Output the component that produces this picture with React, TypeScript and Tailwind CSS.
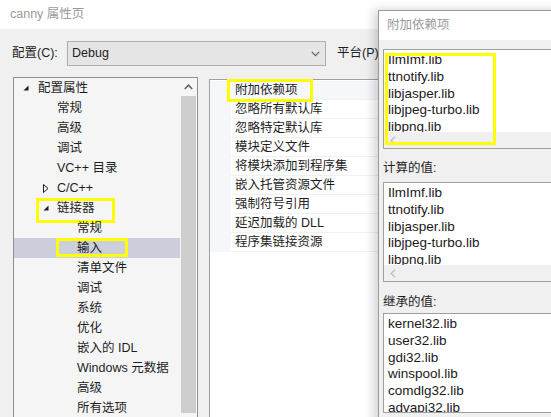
import type { ReactNode } from "react";

type TreeNode = {
  label: string;
  level: 0 | 1 | 2;
  arrow?: "open" | "closed";
  selected?: boolean;
  mark?: string;
};

const tree: TreeNode[] = [
  { label: "配置属性", level: 0, arrow: "open" },
  { label: "常规", level: 1 },
  { label: "高级", level: 1 },
  { label: "调试", level: 1 },
  { label: "VC++ 目录", level: 1 },
  { label: "C/C++", level: 1, arrow: "closed" },
  { label: "链接器", level: 1, arrow: "open", mark: "left-[22px] top-0 w-[79px] h-[25px]" },
  { label: "常规", level: 2 },
  { label: "输入", level: 2, selected: true, mark: "left-[42px] top-0 w-[72px] h-[19px]" },
  { label: "清单文件", level: 2 },
  { label: "调试", level: 2 },
  { label: "系统", level: 2 },
  { label: "优化", level: 2 },
  { label: "嵌入的 IDL", level: 2 },
  { label: "Windows 元数据", level: 2 },
  { label: "高级", level: 2 },
  { label: "所有选项", level: 2 },
];

const linkerInputs = [
  "附加依赖项",
  "忽略所有默认库",
  "忽略特定默认库",
  "模块定义文件",
  "将模块添加到程序集",
  "嵌入托管资源文件",
  "强制符号引用",
  "延迟加载的 DLL",
  "程序集链接资源",
];

const deps = ["IlmImf.lib", "ttnotify.lib", "libjasper.lib", "libjpeg-turbo.lib", "libpng.lib"];
const inherited = ["kernel32.lib", "user32.lib", "gdi32.lib", "winspool.lib", "comdlg32.lib", "advapi32.lib"];

function OpenArrow() {
  return (
    <svg width="6" height="6" viewBox="0 0 6 6" className="block">
      <path d="M5.5 0.5 V5.5 H0.5 Z" fill="#1e1e1e" />
    </svg>
  );
}

function ClosedArrow() {
  return (
    <svg width="6" height="9" viewBox="0 0 6 9" className="block">
      <path d="M0.5 0.5 L5 4.5 L0.5 8.5 Z" fill="none" stroke="#1e1e1e" strokeWidth="1" />
    </svg>
  );
}

function TreeRow({ node }: { node: TreeNode }) {
  const pad = node.level === 0 ? "pl-[9px]" : node.level === 1 ? (node.arrow ? "pl-[29px]" : "pl-[43px]") : "pl-[63px]";
  return (
    <div className={`relative h-[20px] flex items-center ${pad} ${node.selected ? "bg-[#cccedb]" : ""}`}>
      {node.arrow && (
        <span className={`w-[14px] flex ${node.level === 0 ? "w-[15px]" : ""}`}>
          {node.arrow === "open" ? <OpenArrow /> : <ClosedArrow />}
        </span>
      )}
      <span className="whitespace-nowrap">{node.label}</span>
      {node.mark && <span className={`absolute border-[3px] border-[#ffff00] ${node.mark}`} />}
    </div>
  );
}

function HScrollbar() {
  return (
    <div className="h-[16px] shrink-0 bg-[#f0f0f0] flex items-center pl-[6px]">
      <svg width="6" height="9" viewBox="0 0 6 9">
        <path d="M5 0.8 L1.2 4.5 L5 8.2" fill="none" stroke="#c4c4c4" strokeWidth="1.6" />
      </svg>
    </div>
  );
}

function LibBox({ items, scroll, children }: { items: string[]; scroll?: boolean; children?: ReactNode }) {
  return (
    <div className="relative h-[100px] border border-[#a0a0a0] bg-white flex flex-col">
      <div className="flex-1 overflow-hidden pl-[4px] pt-[2px] text-[13.5px] leading-[16.8px] text-[#1a1a1a]">
        {items.map((lib) => (
          <div key={lib} className="whitespace-nowrap">{lib}</div>
        ))}
      </div>
      {scroll && <HScrollbar />}
      {children}
    </div>
  );
}

export default function App() {
  return (
    <div className="relative w-[551px] h-[417px] overflow-hidden bg-[#f0f0f0] text-[12.5px] text-[#1e1e1e] font-['Liberation_Sans','Noto_Sans_CJK_SC',sans-serif]">
      {/* property pages window */}
      <div className="flex flex-col h-full">
        <div className="h-[29px] shrink-0 bg-white flex items-center pl-[10px] text-[12.5px] text-[#9a9a9a]">
          canny 属性页
        </div>

        <div className="mt-[12px] h-[25px] flex items-center pl-[12px]">
          <span className="w-[55px]">配置(C):</span>
          <div className="w-[259px] h-[25px] border border-[#adadad] bg-[#e5e5e5] flex items-center justify-between pl-[4px] pr-[5px]">
            <span>Debug</span>
            <svg width="9" height="6" viewBox="0 0 9 6">
              <path d="M0.8 0.8 L4.5 4.6 L8.2 0.8" fill="none" stroke="#606060" strokeWidth="1.1" />
            </svg>
          </div>
          <span className="ml-[11px]">平台(P):</span>
        </div>

        <div className="mt-[11px] flex items-start">
          {/* category tree */}
          <div className="ml-[13px] w-[185px] h-[345px] border border-[#8e8e98] bg-[#f5f5f5] flex">
            <div className="flex-1">
              {tree.map((node, i) => (
                <TreeRow key={i} node={node} />
              ))}
            </div>
            <div className="w-[17px] flex flex-col">
              <div className="h-[18px] flex items-center justify-center">
                <svg width="9" height="6" viewBox="0 0 9 6">
                  <path d="M0.8 5 L4.5 1.2 L8.2 5" fill="none" stroke="#606060" strokeWidth="1.6" />
                </svg>
              </div>
              <div className="mx-[1px] h-[317px] bg-[#cdcdcd]" />
            </div>
          </div>

          {/* property grid */}
          <div className="ml-[11px] mt-[2px] w-[320px] h-[400px] border border-[#a0a0a0] bg-white pt-[1px]">
            {linkerInputs.map((name, i) => (
              <div key={name} className="h-[19px] flex">
                <div className="w-[21px] bg-[#f5f7fa]" />
                <div className={`relative flex-1 flex items-center pl-[4px] border-b border-[#f0f0f0] ${i === 0 ? "bg-[#f5f7fb]" : ""}`}>
                  {name}
                  {i === 0 && <span className="absolute left-[-4px] top-[-2px] w-[86px] h-[23px] border-[3px] border-[#ffff00]" />}
                </div>
              </div>
            ))}
          </div>
        </div>
      </div>

      {/* additional dependencies dialog */}
      <div className="absolute left-[378px] top-[10px] w-[210px] h-[420px] border border-[#9a9a9a] bg-[#f0f0f0] shadow-[-4px_0_10px_rgba(0,0,0,0.18)] flex flex-col">
        <div className="h-[29px] shrink-0 bg-white flex items-center pl-[8px] text-[#9a9a9a]">附加依赖项</div>
        <div className="pl-[4px] flex flex-col">
          <div className="mt-[9px]">
            <LibBox items={deps} scroll>
              <span className="absolute left-[1px] top-[3px] w-[111px] h-[92px] border-[3px] border-[#ffff00]" />
            </LibBox>
          </div>
          <div className="mt-[11px] h-[16px] leading-[16px] text-[12.5px]">计算的值:</div>
          <div className="mt-[6px]">
            <LibBox items={deps} scroll />
          </div>
          <div className="mt-[12px] h-[16px] leading-[16px] text-[12.5px]">继承的值:</div>
          <div className="mt-[3px]">
            <LibBox items={inherited} />
          </div>
        </div>
      </div>
    </div>
  );
}
